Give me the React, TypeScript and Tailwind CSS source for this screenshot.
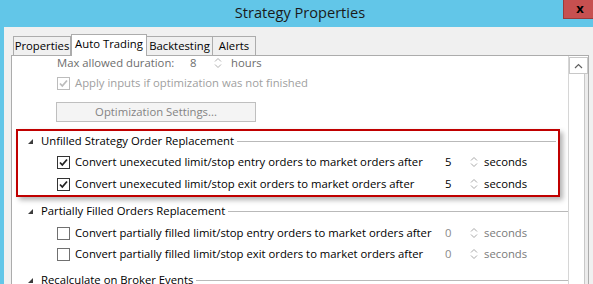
import React from "react";

const font = "font-['Open_Sans','Noto_Sans',sans-serif]";

function Spin({ className }: { className: string }) {
  return (
    <svg width="8" height="14" viewBox="0 0 8 14" className={className}>
      <path d="M1 5.5 L4 2.5 L7 5.5" fill="none" stroke="currentColor" strokeWidth="1" />
      <path d="M1 8.5 L4 11.5 L7 8.5" fill="none" stroke="currentColor" strokeWidth="1" />
    </svg>
  );
}

function Check({ checked, disabled }: { checked: boolean; disabled?: boolean }) {
  const border = disabled ? "border-[#bcbcbc]" : checked ? "border-[#333333]" : "border-[#707070]";
  return (
    <div className={`w-[13px] h-[13px] border ${border} bg-white flex items-center justify-center shrink-0`}>
      {checked && (
        <svg width="11" height="11" viewBox="0 0 11 11">
          <path
            d="M2 5.5 L4.3 8 L9 2.5"
            fill="none"
            stroke={disabled ? "#bcbcbc" : "#222222"}
            strokeWidth="1.8"
          />
        </svg>
      )}
    </div>
  );
}

function Header({ title, boxed }: { title: string; boxed?: boolean }) {
  return (
    <div className={`flex items-center h-[20px] ${boxed ? "pl-[10px] pr-[2px]" : "pl-[16px]"}`}>
      <svg width="5" height="5" viewBox="0 0 5 5" className="shrink-0">
        <path d="M5 0 L5 5 L0 5 Z" fill="#3c3c3c" />
      </svg>
      <span className="ml-[8px] text-[11.3px] text-black whitespace-nowrap">{title}</span>
      <div className="flex-1 h-px bg-[#b9b9b9] ml-[3px]" />
    </div>
  );
}

function OrderRow({
  label,
  value,
  checked,
  boxed,
}: {
  label: string;
  value: string;
  checked: boolean;
  boxed?: boolean;
}) {
  const on = checked;
  return (
    <div className={`flex items-center h-[20px] ${boxed ? "pl-[39px]" : "pl-[45px]"}`}>
      <Check checked={checked} />
      <span className="ml-[5px] w-[370px] text-[11.3px] text-black whitespace-nowrap">{label}</span>
      <span className={`w-[25px] text-[11.3px] ${on ? "text-black" : "text-[#8a8a8a]"}`}>{value}</span>
      <Spin className="text-[#a8a8a8] shrink-0" />
      <span className={`ml-[6px] text-[11.3px] ${on ? "text-black" : "text-[#7a7a7a]"}`}>seconds</span>
    </div>
  );
}

export default function App() {
  return (
    <div className={`w-[593px] h-[284px] overflow-hidden flex flex-col bg-[#62c6e8] ${font}`}>
      {/* title bar */}
      <div className="relative h-[27px] shrink-0 flex items-center justify-center">
        <span className="text-[14.6px] text-[#1a1a1a] pl-[7px] pb-[1px]">Strategy Properties</span>
        <div className="absolute right-0 top-0 w-[30px] h-[19px] bg-[#c75050] border-l border-b border-[#9b3a3a] flex items-center justify-center">
          <span className="text-[13px] font-bold text-black leading-none mb-[2px] ml-[3px]">x</span>
        </div>
      </div>

      <div className="flex-1 flex">
        <div className="w-[4px] shrink-0" />
        <div className="flex-1 bg-[#f0f0f0] pl-[7px] pr-[4px] pt-[7px] flex flex-col">
          {/* tabs */}
          <div className="flex items-end h-[21px] pl-[2px] relative z-10 text-[11.3px]">
            <div className="h-[19px] w-[58px] border border-b-0 border-[#acacac] bg-[#f0f0f0] flex items-center justify-center">
              Properties
            </div>
            <div className="h-[22px] w-[76px] border border-b-0 border-[#acacac] bg-white flex items-center justify-center -mb-px pb-[2px]">
              Auto Trading
            </div>
            <div className="h-[19px] w-[66px] border border-b-0 border-l-0 border-[#acacac] bg-[#f0f0f0] flex items-center justify-center">
              Backtesting
            </div>
            <div className="h-[19px] w-[43px] border border-b-0 border-l-0 border-[#acacac] bg-[#f0f0f0] flex items-center justify-center">
              Alerts
            </div>
          </div>

          {/* panel */}
          <div className="flex-1 border border-[#acacac] bg-white flex overflow-hidden">
            <div className="flex-1 flex flex-col overflow-hidden">
              <div className="flex flex-col">
                <div className="flex items-center h-[13px] leading-[13px] pl-[45px] text-[11.3px] text-[#6d6d6d]">
                  <span className="w-[133px]">Max allowed duration:</span>
                  <span className="w-[24px]">8</span>
                  <Spin className="text-[#b0b0b0]" />
                  <span className="ml-[9px]">hours</span>
                </div>
                <div className="mt-[4px] flex items-center h-[20px] pl-[45px]">
                  <Check checked disabled />
                  <span className="ml-[5px] text-[11.3px] text-[#a0a0a0] whitespace-nowrap">
                    Apply inputs if optimization was not finished
                  </span>
                </div>
                <div className="mt-[9px] ml-[44px] w-[200px] h-[20px] border border-[#bfbfbf] bg-[#f4f4f4] flex items-center justify-center text-[11.3px] text-[#838383]">
                  Optimization Settings...
                </div>

                <div className="mt-[7px] ml-[4px] w-[544px] border-2 border-[#c00000] pb-[1px] shadow-[3px_3px_5px_rgba(0,0,0,0.3)]">
                  <Header title="Unfilled Strategy Order Replacement" boxed />
                  <div className="mt-[1px]">
                    <OrderRow
                      boxed
                      checked
                      value="5"
                      label="Convert unexecuted limit/stop entry orders to market orders after"
                    />
                  </div>
                  <div className="mt-[2px]">
                    <OrderRow
                      boxed
                      checked
                      value="5"
                      label="Convert unexecuted limit/stop exit orders to market orders after"
                    />
                  </div>
                </div>

                <div className="mt-[4px]">
                  <Header title="Partially Filled Orders Replacement" />
                </div>
                <div className="mt-[2px]">
                  <OrderRow
                    checked={false}
                    value="0"
                    label="Convert partially filled limit/stop entry orders to market orders after"
                  />
                </div>
                <div className="mt-[1px]">
                  <OrderRow
                    checked={false}
                    value="0"
                    label="Convert partially filled limit/stop exit orders to market orders after"
                  />
                </div>
                <div className="mt-[6px]">
                  <Header title="Recalculate on Broker Events" />
                </div>
              </div>
            </div>

            {/* scrollbar */}
            <div className="w-[20px] shrink-0 border-l border-[#d6d6d6] bg-white flex flex-col">
              <div className="mt-[1px] h-[17px] border border-[#c8c8c8] flex items-center justify-center">
                <svg width="9" height="6" viewBox="0 0 9 6">
                  <path d="M1 5 L4.5 1.5 L8 5" fill="none" stroke="#606060" strokeWidth="1.2" />
                </svg>
              </div>
              <div className="flex-1 flex justify-end">
                <div className="w-[4px] border-l border-[#c8c8c8] bg-[#ececec]" />
              </div>
            </div>
          </div>
        </div>
      </div>
    </div>
  );
}
